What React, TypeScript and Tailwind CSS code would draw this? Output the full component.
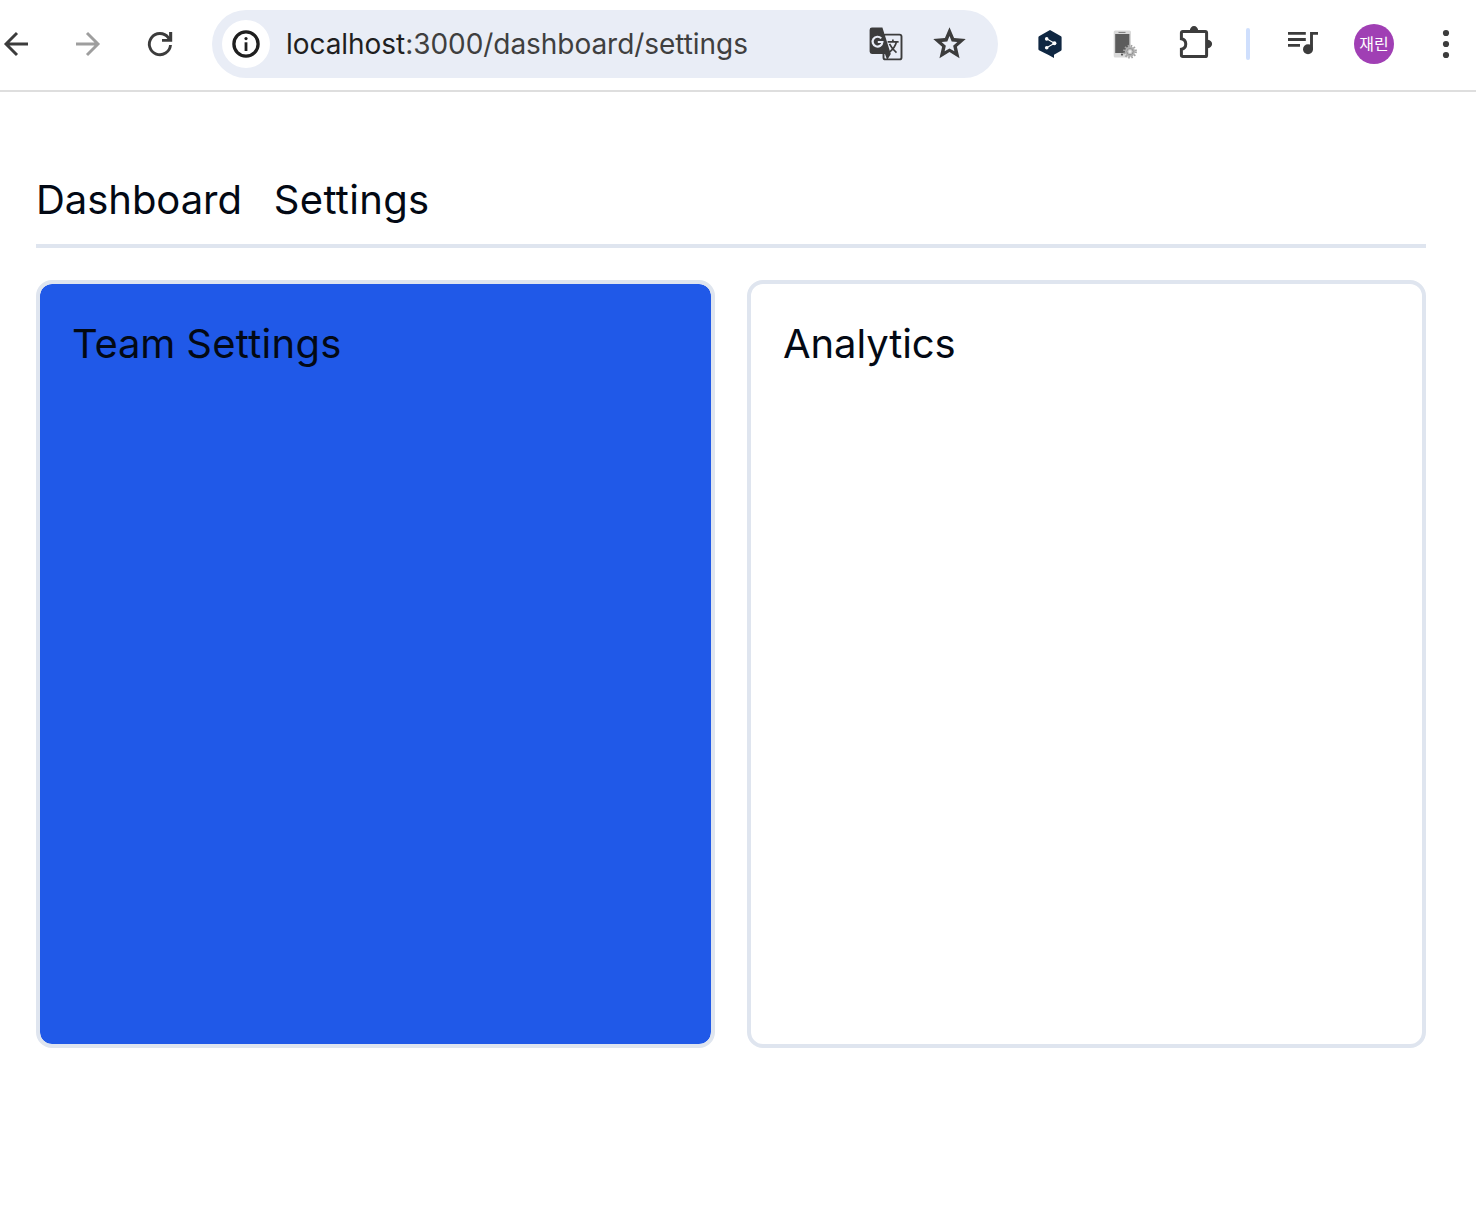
import type { ReactNode } from "react";

function Icon({ className = "", children }: { className?: string; children: ReactNode }) {
  return (
    <svg viewBox="0 0 32 32" fill="none" className={`size-8 shrink-0 overflow-visible ${className}`}>
      {children}
    </svg>
  );
}

function BackIcon() {
  return (
    <Icon className="text-[#3c3c3c]">
      <path d="M28 16H6M17 5L6 16l11 11" stroke="currentColor" strokeWidth="2.9" />
    </Icon>
  );
}

function ForwardIcon() {
  return (
    <Icon className="ml-10 text-[#9e9e9e]">
      <path d="M4 16h22M15 5l11 11-11 11" stroke="currentColor" strokeWidth="2.9" />
    </Icon>
  );
}

function ReloadIcon() {
  return (
    <Icon className="ml-10 text-[#3c3c3c]">
      <path d="M26.5 17A10.6 10.6 0 1 1 24.3 9.6L26 12" stroke="currentColor" strokeWidth="2.9" />
      <path d="M28.2 4v9.8H18v-2.9h5.2l1.9-2V4z" fill="currentColor" />
    </Icon>
  );
}

function InfoIcon() {
  return (
    <Icon className="text-[#1f1f1f]">
      <circle cx="16" cy="16" r="12.1" stroke="currentColor" strokeWidth="3.3" />
      <circle cx="16" cy="10.6" r="1.6" fill="currentColor" />
      <path d="M16 14.3V23" stroke="currentColor" strokeWidth="2.8" />
    </Icon>
  );
}

function TranslateIcon() {
  return (
    <Icon className="text-[#3c3c3c]">
      <rect x="13.5" y="6.6" width="18" height="24.8" rx="2" stroke="currentColor" strokeWidth="1.9" />
      <path d="M2-.5h10.4L20.8 26l-3.6 6L15 26H2a2.4 2.4 0 0 1-2.4-2.4V1.9A2.4 2.4 0 0 1 2-.5z" fill="currentColor" />
      <path d="M17.6 13.9h11M22.9 11.4v2.5M26.4 14c-1 4-3.3 7.2-6.6 9.8M19.5 15.8c1.8 3.6 4.2 6.6 7 8.8" stroke="currentColor" strokeWidth="1.7" />
      <path d="M11.2 10.4A4.9 4.9 0 1 0 12.4 14H7.8" stroke="#e9edf6" strokeWidth="2.2" />
    </Icon>
  );
}

function StarIcon() {
  return (
    <svg viewBox="0 0 24 24" className="-mr-[3px] -mt-px ml-7 size-[39px] shrink-0 text-[#3c3c3c]">
      <path
        fillRule="evenodd"
        fill="currentColor"
        d="M22 9.24l-7.19-.62L12 2 9.19 8.63 2 9.24l5.46 4.73L5.82 21 12 17.27 18.18 21l-1.63-7.03zM12 15l-3 1.75.75-3.4-2.6-2.3 3.5-.32L12 7.4l1.35 3.33 3.5.32-2.6 2.3.75 3.4z"
      />
    </svg>
  );
}

function HexagonShareIcon() {
  return (
    <Icon className="ml-9">
      <path d="M16 2l11 6.2q.6.4.6 1.2v12.2q0 .8-.6 1.2L20 26.8V30l-5.4-3-9.6-4.8q-.6-.4-.6-1.2V9.4q0-.8.6-1.2z" fill="#0f2742" />
      <path d="M12.6 10.8l7.9 4.4-7.9 4.6" stroke="#fff" strokeWidth="1.1" />
      <circle cx="12.7" cy="10.9" r="1.8" fill="#fff" />
      <circle cx="20.4" cy="15.2" r="2" fill="#fff" />
      <circle cx="12.7" cy="19.7" r="1.8" fill="#fff" />
    </Icon>
  );
}

function PhoneGearIcon() {
  return (
    <Icon className="ml-[42px]">
      <rect x="5.7" y="2.5" width="17.3" height="27" rx="1.5" fill="#d9d9d9" />
      <rect x="7.2" y="6" width="14.2" height="19" fill="#5c5c5c" />
      <path d="M10.5 4.4h7" stroke="#777" strokeWidth="1" />
      <circle cx="14" cy="26.6" r="1.1" fill="#555" />
      <circle cx="22" cy="23.6" r="5.7" stroke="#a3a3a3" strokeWidth="2.4" strokeDasharray="1.5 1.49" />
      <circle cx="22" cy="23.6" r="5" fill="#b0b0b0" />
      <circle cx="22" cy="23.6" r="3.1" fill="#c9c9c9" stroke="#8d8d8d" strokeWidth="0.9" />
      <circle cx="22" cy="23.6" r="1.3" fill="#eee" />
    </Icon>
  );
}

function PuzzleIcon() {
  return (
    <Icon className="ml-10 text-[#3c3c3c]">
      <path
        d="M2.8 3.4H25.2Q26.6 3.4 26.6 4.8V27.2Q26.6 28.6 25.2 28.6H2.8Q1.4 28.6 1.4 27.2V21.3A5.4 5.4 0 0 0 1.4 10.7V4.8Q1.4 3.4 2.8 3.4z"
        stroke="currentColor"
        strokeWidth="3"
      />
      <path d="M9.8 3a4.2 4.9 0 0 1 8.4 0zM27.2 11.8a4.9 4.2 0 0 1 0 8.4z" fill="currentColor" />
    </Icon>
  );
}

function QueueIcon() {
  return (
    <Icon className="ml-[37px] text-[#3c3c3c]">
      <path d="M1 5.4h17.8M1 11.5h17.8M1 17.4h12" stroke="currentColor" strokeWidth="2.8" />
      <path d="M24.5 21.5V5.4H31" stroke="currentColor" strokeWidth="2.9" />
      <circle cx="21" cy="21.2" r="5" fill="currentColor" />
    </Icon>
  );
}

function MenuIcon() {
  return (
    <Icon className="ml-9 text-[#3c3c3c]">
      <circle cx="16" cy="5" r="3.1" fill="currentColor" />
      <circle cx="16" cy="16" r="3.1" fill="currentColor" />
      <circle cx="16" cy="27" r="3.1" fill="currentColor" />
    </Icon>
  );
}

function Toolbar() {
  return (
    <header className="flex h-[92px] items-center border-b-2 border-[#dedede] pb-0.5">
      <BackIcon />
      <ForwardIcon />
      <ReloadIcon />
      <div className="ml-9 flex h-[68px] w-[786px] shrink-0 items-center rounded-full bg-[#e9edf6] pl-2.5 pr-8">
        <div className="flex size-12 shrink-0 items-center justify-center rounded-full bg-white">
          <InfoIcon />
        </div>
        <span className="ml-4 grow whitespace-nowrap text-[28px] leading-9 tracking-[-0.05px] text-[#3f3f3f]">
          <span className="text-[#1f1f1f]">localhost</span>:3000/dashboard/settings
        </span>
        <TranslateIcon />
        <StarIcon />
      </div>
      <HexagonShareIcon />
      <PhoneGearIcon />
      <PuzzleIcon />
      <div className="ml-[34px] h-8 w-1 shrink-0 rounded-full bg-[#cfdffd]" />
      <QueueIcon />
      <div className="ml-[35px] flex size-10 shrink-0 items-center justify-center rounded-full bg-[#a03fb4] pb-0.5 font-['Noto_Sans_CJK_KR',sans-serif] text-[16px] leading-none text-white">
        재린
      </div>
      <MenuIcon />
    </header>
  );
}

export default function App() {
  return (
    <div className="min-h-screen bg-white font-['Inter',sans-serif] text-[#030914]">
      <Toolbar />
      <main className="pl-9 pr-[50px] pt-20 text-[40px] leading-[56px]">
        <nav className="flex gap-8 border-b-4 border-[#dfe5ef] pb-4">
          <a className="tracking-[-0.05px]">Dashboard</a>
          <a className="tracking-[0.3px]">Settings</a>
        </nav>
        <div className="mt-8 grid h-[768px] grid-cols-2 gap-8">
          <section className="rounded-2xl border-4 border-[#dfe5ef] bg-[#2059e8] bg-clip-padding p-8">
            <span className="tracking-[-0.2px]">Team </span>
            <span className="tracking-[0.3px]">Settings</span>
          </section>
          <section className="rounded-2xl border-4 border-[#dfe5ef] p-8 tracking-[-0.1px]">Analytics</section>
        </div>
      </main>
    </div>
  );
}
